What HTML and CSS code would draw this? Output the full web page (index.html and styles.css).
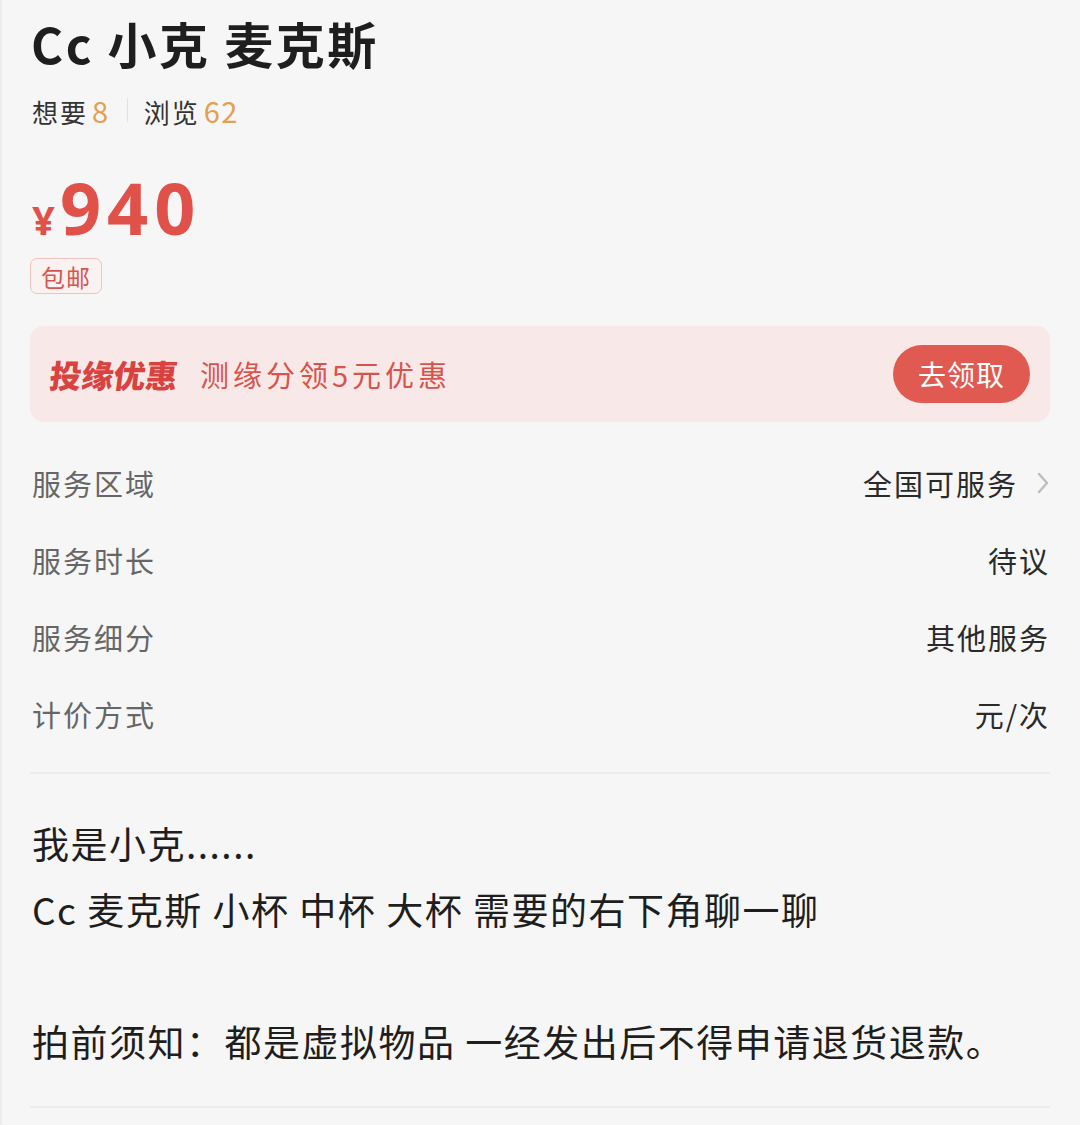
FILE: index.html
```html
<!DOCTYPE html>
<html lang="zh-CN">
<head>
<meta charset="utf-8">
<title>Cc 小克 麦克斯</title>
<link rel="stylesheet" href="styles.css">
</head>
<body>
<div class="page">
  <h1 class="title">Cc 小克 麦克斯</h1>
  <div class="stats">
    <span class="stat">想要<em>8</em></span>
    <span class="sep"></span>
    <span class="stat">浏览<em>62</em></span>
  </div>
  <div class="price"><span class="yen">¥</span><span class="amount">940</span></div>
  <div class="tags"><span class="tag">包邮</span></div>

  <div class="promo">
    <div class="promo-text">
      <span class="promo-title">投缘优惠</span>
      <span class="promo-desc">测缘分领5元优惠</span>
    </div>
    <span class="promo-btn">去领取</span>
  </div>

  <div class="rows">
    <div class="row">
      <span class="label">服务区域</span>
      <span class="value">全国可服务
        <svg class="chev" width="14" height="24" viewBox="0 0 14 24"><path d="M3 3 L11 12 L3 21" fill="none" stroke="#bdbdbd" stroke-width="2.4" stroke-linecap="round" stroke-linejoin="round"/></svg>
      </span>
    </div>
    <div class="row"><span class="label">服务时长</span><span class="value">待议</span></div>
    <div class="row"><span class="label">服务细分</span><span class="value">其他服务</span></div>
    <div class="row"><span class="label">计价方式</span><span class="value">元/次</span></div>
  </div>

  <div class="divider"></div>

  <div class="desc">
    <p>我是小克......</p>
    <p>Cc 麦克斯 小杯 中杯 大杯 需要的右下角聊一聊</p>
    <p class="blank">&nbsp;</p>
    <p>拍前须知：都是虚拟物品 一经发出后不得申请退货退款。</p>
  </div>

  <div class="divider bottom"></div>
</div>
</body>
</html>
```

FILE: styles.css
```css
* { box-sizing: border-box; }

html, body {
  margin: 0;
  padding: 0;
  background: #f6f6f6;
}

body {
  font-family: "Noto Sans CJK SC", "Noto Sans", sans-serif;
  color: #222;
}

.page {
  padding: 13px 30px 0 28px;
  border-left: 2px solid #ececec;
  min-height: 1125px;
}

.title {
  margin: 0 0 0 1px;
  font-size: 49px;
  line-height: 60px;
  font-weight: 700;
  letter-spacing: 2.5px;
  color: #1e1e1e;
}

.stats {
  margin-top: 17px;
  height: 40px;
  display: flex;
  align-items: center;
  font-size: 26px;
  letter-spacing: 2px;
  color: #333;
  padding-left: 2px;
}

.stat em {
  font-style: normal;
  font-size: 29px;
  color: #e2a050;
  margin-left: 4px;
  letter-spacing: 1.5px;
}

.sep {
  width: 1px;
  height: 24px;
  background: #e2e2e2;
  margin: 0 16px 0 17px;
}

.price {
  margin-top: 37px;
  height: 80px;
  display: flex;
  align-items: baseline;
  color: #e05249;
  font-family: "Noto Sans", "Open Sans", sans-serif;
  font-weight: 700;
  line-height: 80px;
  padding-left: 2px;
}

.yen {
  font-size: 40px;
  margin-right: 5px;
}

.amount {
  font-size: 72px;
  letter-spacing: 6px;
}

.tags {
  margin-top: 11px;
  display: flex;
}

.tag {
  display: inline-flex;
  align-items: center;
  height: 36px;
  padding: 0 10px;
  border: 1.5px solid #efc3c1;
  border-radius: 7px;
  font-size: 24px;
  color: #d9554e;
  background: #faf1f1;
  letter-spacing: 1px;
}

.promo {
  margin-top: 32px;
  height: 96px;
  border-radius: 14px;
  background: #f8e9e8;
  display: flex;
  align-items: center;
  justify-content: space-between;
  padding: 0 20px 0 20px;
}

.promo-text {
  display: flex;
  align-items: center;
}

.promo-title {
  font-size: 32px;
  font-weight: 900;
  color: #d9423f;
  display: inline-block;
  transform: skewX(-7deg);
}

.promo-desc {
  margin-left: 22px;
  font-size: 29px;
  color: #d9534d;
  letter-spacing: 4px;
}

.promo-btn {
  display: inline-flex;
  align-items: center;
  justify-content: center;
  width: 137px;
  height: 58px;
  border-radius: 29px;
  background: #e05a51;
  color: #fff;
  font-size: 28px;
  letter-spacing: 1px;
}

.rows {
  margin-top: 22px;
}

.row {
  height: 77px;
  display: flex;
  align-items: center;
  justify-content: space-between;
  font-size: 29px;
  letter-spacing: 2px;
  padding-left: 2px;
}

.label {
  color: #666;
}

.value {
  color: #2a2a2a;
  display: inline-flex;
  align-items: center;
}

.chev {
  margin-left: 18px;
}

.divider {
  margin-top: 20px;
  height: 2px;
  background: #ebebeb;
}

.desc {
  margin-top: 36px;
  font-size: 37px;
  line-height: 66px;
  letter-spacing: 1.5px;
  color: #1e1e1e;
  padding-left: 2px;
}

.desc p {
  margin: 0;
}

.divider.bottom {
  margin-top: 32px;
}
```
